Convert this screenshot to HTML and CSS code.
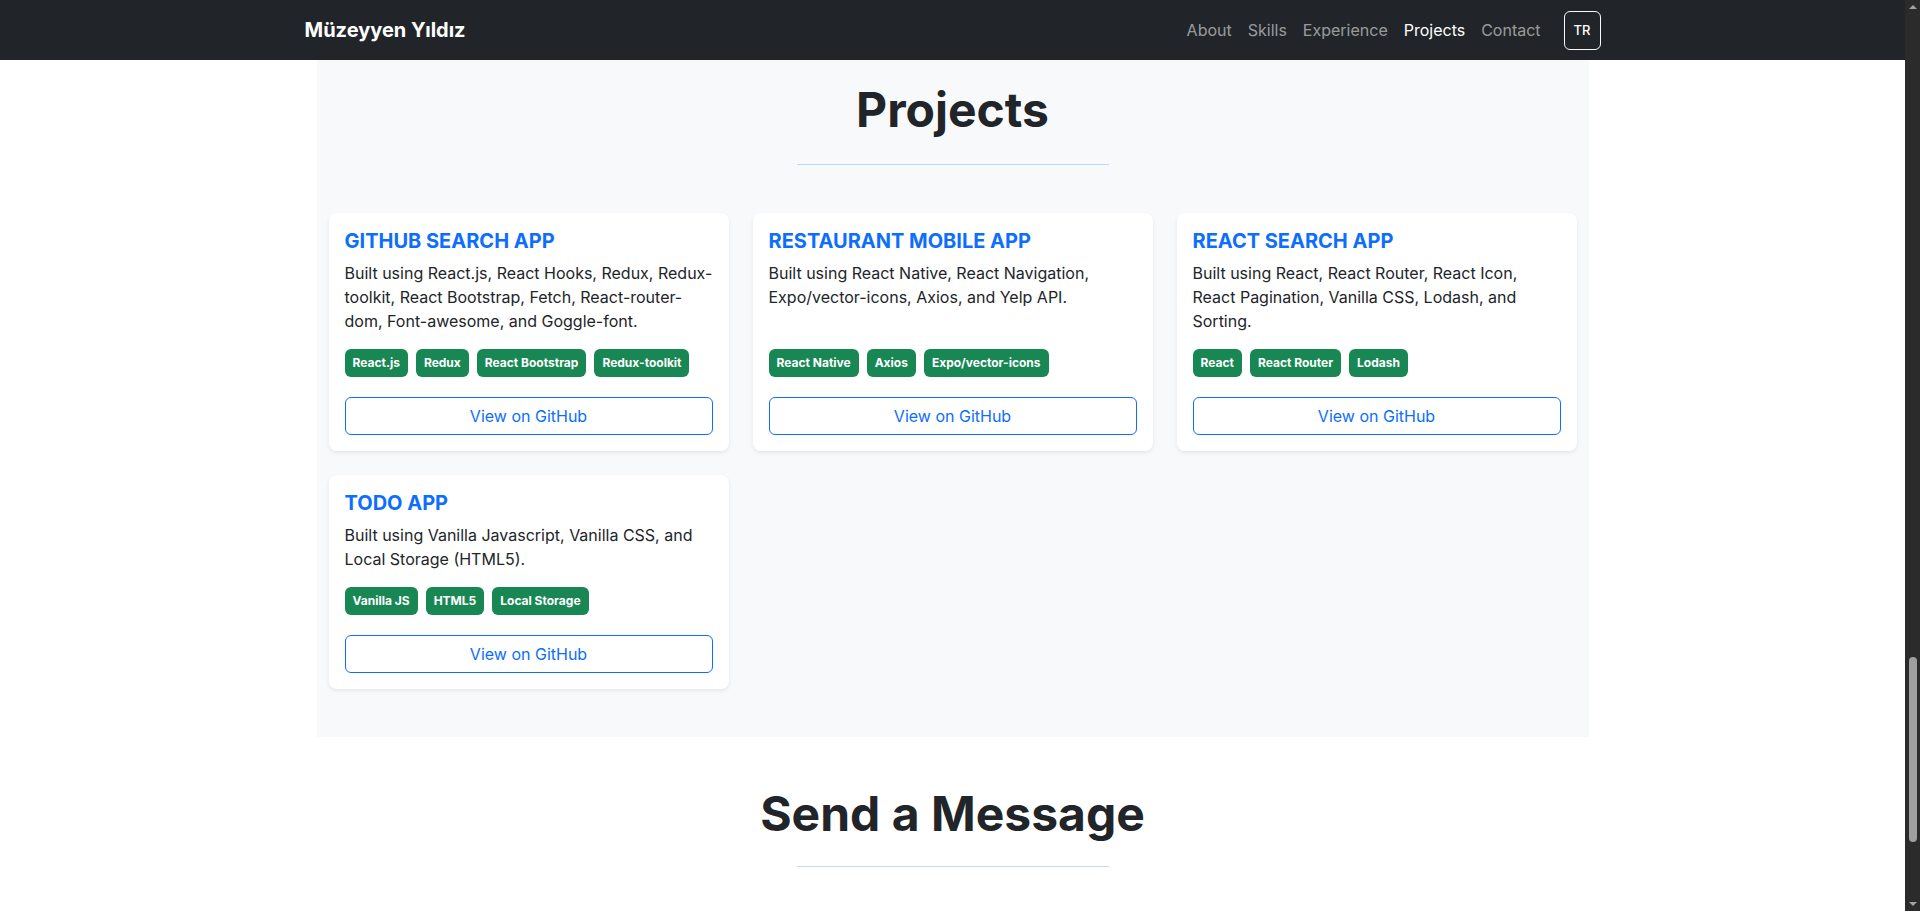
FILE: index.html
```html
<!DOCTYPE html>
<html lang="en">
<head>
<meta charset="utf-8">
<title>Müzeyyen Yıldız — Projects</title>
<link rel="stylesheet" href="styles.css">
</head>
<body>
<div class="viewport">
  <div class="page">
    <nav class="navbar">
      <div class="container nav-inner">
        <a class="brand" href="#">Müzeyyen Yıldız</a>
        <div class="nav-right">
          <ul class="nav-links">
            <li><a href="#about">About</a></li>
            <li><a href="#skills">Skills</a></li>
            <li><a href="#experience">Experience</a></li>
            <li><a class="active" href="#projects">Projects</a></li>
            <li><a href="#contact">Contact</a></li>
          </ul>
          <button class="lang-btn" type="button">TR</button>
        </div>
      </div>
    </nav>

    <main>
      <section class="projects" id="projects">
        <div class="container">
          <div class="panel">
            <h2 class="section-title">Projects</h2>
            <hr class="section-rule">
            <div class="card-grid">
              <article class="card">
                <h3 class="card-title">GITHUB SEARCH APP</h3>
                <p class="card-text">Built using React.js, React Hooks, Redux, Redux-toolkit, React Bootstrap, Fetch, React-router-dom, Font-awesome, and Goggle-font.</p>
                <div class="badges">
                  <span class="badge">React.js</span>
                  <span class="badge">Redux</span>
                  <span class="badge">React Bootstrap</span>
                  <span class="badge">Redux-toolkit</span>
                </div>
                <a class="btn-outline" href="#">View on GitHub</a>
              </article>

              <article class="card">
                <h3 class="card-title">RESTAURANT MOBILE APP</h3>
                <p class="card-text">Built using React Native, React Navigation, Expo/vector-icons, Axios, and Yelp API.</p>
                <div class="badges">
                  <span class="badge">React Native</span>
                  <span class="badge">Axios</span>
                  <span class="badge">Expo/vector-icons</span>
                </div>
                <a class="btn-outline" href="#">View on GitHub</a>
              </article>

              <article class="card">
                <h3 class="card-title">REACT SEARCH APP</h3>
                <p class="card-text">Built using React, React Router, React Icon, React Pagination, Vanilla CSS, Lodash, and Sorting.</p>
                <div class="badges">
                  <span class="badge">React</span>
                  <span class="badge">React Router</span>
                  <span class="badge">Lodash</span>
                </div>
                <a class="btn-outline" href="#">View on GitHub</a>
              </article>

              <article class="card">
                <h3 class="card-title">TODO APP</h3>
                <p class="card-text">Built using Vanilla Javascript, Vanilla CSS, and Local Storage (HTML5).</p>
                <div class="badges">
                  <span class="badge">Vanilla JS</span>
                  <span class="badge">HTML5</span>
                  <span class="badge">Local Storage</span>
                </div>
                <a class="btn-outline" href="#">View on GitHub</a>
              </article>
            </div>
          </div>
        </div>
      </section>

      <section class="contact" id="contact">
        <div class="container">
          <h2 class="section-title">Send a Message</h2>
          <hr class="section-rule">
        </div>
      </section>
    </main>
  </div>

  <div class="scrollbar" aria-hidden="true">
    <span class="arrow arrow-up"></span>
    <div class="track"><div class="thumb"></div></div>
    <span class="arrow arrow-down"></span>
  </div>
</div>
</body>
</html>
```

FILE: styles.css
```css
* { box-sizing: border-box; }

html, body {
  margin: 0;
  padding: 0;
  height: 100%;
  overflow: hidden;
}

body {
  font-family: Inter, "Noto Sans", "Liberation Sans", sans-serif;
  font-size: 16px;
  line-height: 1.5;
  color: #212529;
  background: #fff;
}

.viewport {
  display: flex;
  height: 100vh;
}

.page {
  flex: 1;
  min-width: 0;
  overflow: hidden;
}

.container {
  width: 1320px;
  margin: 0 auto;
  padding: 0 12px;
}

/* Navbar */
.navbar {
  background: #212529;
  height: 60px;
}

.nav-inner {
  height: 100%;
  display: flex;
  align-items: center;
  justify-content: space-between;
}

.brand {
  color: #fff;
  text-decoration: none;
  font-weight: 700;
  font-size: 20px;
  line-height: 30px;
}

.nav-right {
  display: flex;
  align-items: center;
}

.nav-links {
  list-style: none;
  margin: 0;
  padding: 0;
  display: flex;
}

.nav-links a {
  display: block;
  padding: 8px;
  color: rgba(255, 255, 255, 0.55);
  text-decoration: none;
  font-size: 16px;
  line-height: 24px;
}

.nav-links a.active {
  color: #fff;
}

.lang-btn {
  margin-left: 15px;
  height: 39px;
  padding: 0 9px;
  background: transparent;
  color: #fff;
  border: 1px solid #f8f9fa;
  border-radius: 6px;
  font-family: inherit;
  font-size: 13px;
  font-weight: 500;
  line-height: 1;
}

/* Projects */
.panel {
  margin: 0 12px;
  background: #f8f9fa;
  padding: 21px 12px 48px;
}

.section-title {
  margin: 0;
  text-align: center;
  font-size: 48px;
  font-weight: 700;
  line-height: 1.2;
  color: #212529;
}

.section-rule {
  width: 312px;
  margin: 25px auto 48px;
  border: 0;
  border-top: 1px solid #bdd6fb;
  height: 0;
}

.card-grid {
  display: grid;
  grid-template-columns: repeat(3, 1fr);
  gap: 24px;
}

.card {
  display: flex;
  flex-direction: column;
  background: #fff;
  border-radius: 8px;
  padding: 16px;
  box-shadow: 0 2px 4px rgba(0, 0, 0, 0.075);
}

.card-title {
  margin: 0 0 8px;
  font-size: 20px;
  font-weight: 700;
  line-height: 1.2;
  color: #0d6efd;
}

.card-text {
  flex: 1;
  margin: 0 0 16px;
  font-size: 16px;
  line-height: 24px;
  color: #212529;
}

.badges {
  display: flex;
  flex-wrap: wrap;
  gap: 8px;
  margin-bottom: 20px;
}

.badge {
  display: inline-block;
  padding: 8px;
  background: #198754;
  color: #fff;
  font-size: 12px;
  font-weight: 700;
  line-height: 12px;
  border-radius: 6px;
}

.btn-outline {
  display: block;
  width: 100%;
  padding: 6px 12px;
  border: 1px solid #0d6efd;
  border-radius: 6px;
  color: #0d6efd;
  text-decoration: none;
  text-align: center;
  font-size: 16px;
  line-height: 24px;
}

/* Contact */
.contact {
  padding-top: 48px;
}

.contact .section-rule {
  margin-top: 24px;
  border-top-color: #c8dcf5;
}

/* Scrollbar imitation */
.scrollbar {
  width: 15px;
  flex: none;
  background: #2b2b2b;
  display: flex;
  flex-direction: column;
  align-items: center;
}

.arrow {
  flex: none;
  width: 0;
  height: 0;
  border-left: 4px solid transparent;
  border-right: 4px solid transparent;
}

.arrow-up {
  margin: 5px 0 6px;
  border-bottom: 4px solid #a3a3a3;
}

.arrow-down {
  margin: 6px 0 5px;
  border-top: 4px solid #a3a3a3;
}

.track {
  flex: 1;
  width: 100%;
  display: flex;
  justify-content: center;
}

.thumb {
  width: 8px;
  height: 185px;
  margin-top: 642px;
  background: #9f9f9f;
  border-radius: 4px;
}
```
